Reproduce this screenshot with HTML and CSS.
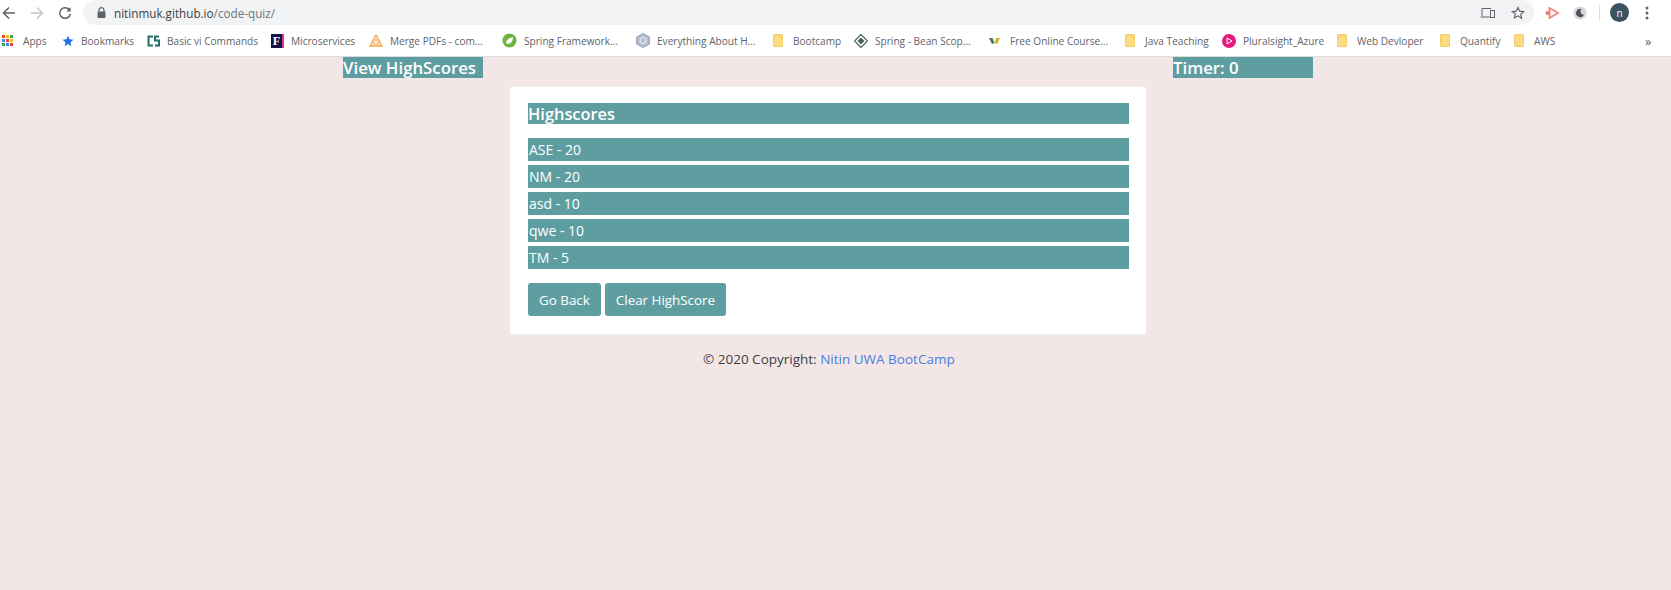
FILE: index.html
```html
<!DOCTYPE html>
<html lang="en">
<head>
    <meta charset="UTF-8">
    <title>Code Quiz</title>
    <link rel="stylesheet" href="styles.css">
</head>
<body>
    <div class="browser-top">
        <div class="nav-icons">
            <svg width="14" height="14" viewBox="0 0 14 14"><path d="M13 7H2M7 1.5 1.5 7 7 12.5" fill="none" stroke="#5f6368" stroke-width="1.5"/></svg>
            <svg width="14" height="14" viewBox="0 0 14 14"><path d="M1 7h11M7 1.5 12.5 7 7 12.5" fill="none" stroke="#c4c7ca" stroke-width="1.5"/></svg>
            <svg width="14" height="14" viewBox="0 0 14 14"><path d="M11.6 4.2A5.3 5.3 0 1 0 12.3 8" fill="none" stroke="#5f6368" stroke-width="1.5"/><path d="M12.6 1.2v4.3H8.3z" fill="#5f6368"/></svg>
        </div>
        <div class="omnibox">
            <svg class="lock" width="9" height="11" viewBox="0 0 9 11"><path d="M2 5V3.2a2.5 2.5 0 0 1 5 0V5" fill="none" stroke="#5f6368" stroke-width="1.2"/><rect x="0.5" y="4.5" width="8" height="6.5" rx="1" fill="#5f6368"/></svg>
            <span class="url">nitinmuk.github.io<span class="url-path">/code-quiz/</span></span>
            <div class="omni-icons">
                <svg width="15" height="12" viewBox="0 0 15 12"><path d="M2 9V1.5h9M0.5 10h9" fill="none" stroke="#5f6368" stroke-width="1"/><rect x="10.5" y="3.5" width="4" height="7" fill="none" stroke="#5f6368"/></svg>
                <svg width="14" height="14" viewBox="0 0 24 24"><path d="M12 2.5l2.9 6.4 7 .8-5.2 4.7 1.4 6.9L12 16.900l-6.100 3.500 1.400-6.900L2.100 9.700l7-.8z" fill="none" stroke="#5f6368" stroke-width="2"/></svg>
            </div>
        </div>
        <div class="ext-icons">
            <svg class="ext-red" width="14" height="12" viewBox="0 0 14 12"><path d="M4.500 1 13 6 4.500 11z" fill="none" stroke="#f28b82" stroke-width="2"/><circle cx="2.500" cy="6" r="2" fill="#ee7d74"/></svg>
            <svg class="ext-moon" width="14" height="14" viewBox="0 0 14 14"><circle cx="7" cy="7" r="6.500" fill="#d5d8da"/><path d="M8.500 3A4.200 4.200 0 1 0 11 9 3.500 3.500 0 0 1 8.500 3z" fill="#4d5156"/></svg>
            <span class="divider"></span>
            <span class="avatar">n</span>
            <svg class="dots" width="4" height="14" viewBox="0 0 4 14"><circle cx="2" cy="2" r="1.500" fill="#5f6368"/><circle cx="2" cy="7" r="1.500" fill="#5f6368"/><circle cx="2" cy="12" r="1.500" fill="#5f6368"/></svg>
        </div>
    </div>

    <div class="bookmarks">
        <a class="bm bm-wide">
            <svg width="11" height="11" viewBox="0 0 11 11"><g><rect width="3" height="3" fill="#ea4335"/><rect x="4" width="3" height="3" fill="#fbbc04"/><rect x="8" width="3" height="3" fill="#34a853"/><rect y="4" width="3" height="3" fill="#4285f4"/><rect x="4" y="4" width="3" height="3" fill="#ea4335"/><rect x="8" y="4" width="3" height="3" fill="#fbbc04"/><rect y="8" width="3" height="3" fill="#34a853"/><rect x="4" y="8" width="3" height="3" fill="#4285f4"/><rect x="8" y="8" width="3" height="3" fill="#ea4335"/></g></svg>
            <span>Apps</span>
        </a>
        <a class="bm">
            <svg width="12" height="12" viewBox="0 0 24 24"><path d="M12 1.500l3.100 7.200 7.800.7-5.900 5.200 1.800 7.700L12 18.200l-6.800 4.100 1.800-7.700-5.900-5.200 7.800-.7z" fill="#1a73e8"/></svg>
            <span>Bookmarks</span>
        </a>
        <a class="bm">
            <svg width="13" height="12" viewBox="0 0 13 12"><path d="M6 1.500H1.500v9H6M12 1.500H8v4h4v5H8" fill="none" stroke="#1f6f6b" stroke-width="2"/></svg>
            <span>Basic vi Commands</span>
        </a>
        <a class="bm">
            <span class="fav-f">F</span>
            <span>Microservices</span>
        </a>
        <a class="bm">
            <svg width="14" height="13" viewBox="0 0 14 13"><path d="M7 1 13 12H1z" fill="none" stroke="#f5a33b" stroke-width="1.300"/><path d="M7 5l3 5H4z" fill="none" stroke="#f5a33b"/></svg>
            <span>Merge PDFs - com...</span>
        </a>
        <a class="bm">
            <svg width="15" height="15" viewBox="0 0 15 15"><circle cx="7.500" cy="7.500" r="7" fill="#6db33f"/><path d="M4 10.500C4 6.500 7 5 11 4c0 4-2 7-5.500 6.800" fill="#fff"/></svg>
            <span>Spring Framework...</span>
        </a>
        <a class="bm">
            <svg width="14" height="15" viewBox="0 0 14 15"><path d="M7 .5 13.300 4v7L7 14.500.7 11V4z" fill="#b6c0d0" stroke="#8e9bb0"/><circle cx="7" cy="7.500" r="3" fill="none" stroke="#eef0f4"/></svg>
            <span>Everything About H...</span>
        </a>
        <a class="bm bm-wide"><span class="folder"></span><span>Bootcamp</span></a>
        <a class="bm">
            <svg width="14" height="14" viewBox="0 0 14 14"><path d="M7 .5 13.500 7 7 13.500.5 7z" fill="none" stroke="#47655a" stroke-width="1.200"/><path d="M7 3.500 10.500 7 7 10.500 3.500 7z" fill="#47655a"/></svg>
            <span>Spring - Bean Scop...</span>
        </a>
        <a class="bm bm-wide">
            <svg width="11" height="6" viewBox="0 0 11 6"><path d="M0 0h3.500L5.500 5 3 6z" fill="#3f7d4f"/><path d="M11 0H7.500L5.500 5 8 6z" fill="#d7a928"/></svg>
            <span>Free Online Course...</span>
        </a>
        <a class="bm bm-wide"><span class="folder"></span><span>Java Teaching</span></a>
        <a class="bm">
            <svg width="14" height="14" viewBox="0 0 14 14"><circle cx="7" cy="7" r="7" fill="#e6197d"/><path d="M5 4l5 3-5 3z" fill="none" stroke="#fff"/></svg>
            <span>Pluralsight_Azure</span>
        </a>
        <a class="bm bm-wide"><span class="folder"></span><span>Web Devloper</span></a>
        <a class="bm bm-wide"><span class="folder"></span><span>Quantify</span></a>
        <a class="bm bm-wide"><span class="folder"></span><span>AWS</span></a>
        <span class="more">»</span>
    </div>

    <div class="page">
        <div class="top-row">
            <span class="top-label">View HighScores</span>
            <span class="top-label">Timer: 0</span>
        </div>

        <div class="card">
            <h2 class="card-title">Highscores</h2>
            <ul class="scores">
                <li>ASE - 20</li>
                <li>NM - 20</li>
                <li>asd - 10</li>
                <li>qwe - 10</li>
                <li>TM - 5</li>
            </ul>
            <div class="buttons">
                <button class="btn">Go Back</button>
                <button class="btn">Clear HighScore</button>
            </div>
        </div>

        <p class="footer">© 2020 Copyright: <a href="#">Nitin UWA BootCamp</a></p>
    </div>
</body>
</html>
```

FILE: styles.css
```css
* {
    box-sizing: border-box;
}

html, body {
    height: 100%;
}

body {
    margin: 0;
    display: flex;
    flex-direction: column;
    background-color: #f3e6e6;
    font-family: "Open Sans", "Noto Sans", sans-serif;
    overflow: hidden;
}

/* browser chrome */
.browser-top {
    height: 25px;
    background-color: #fff;
    display: flex;
    align-items: center;
}

.nav-icons {
    width: 83px;
    padding-left: 2px;
    display: flex;
    align-items: center;
    gap: 14px;
}

.omnibox {
    width: 1451px;
    height: 25px;
    background-color: #f1f3f4;
    border-radius: 13px;
    display: flex;
    align-items: center;
    padding: 0 9px 0 14px;
}

.lock {
    margin-right: 8px;
}

.url {
    font-size: 11.7px;
    color: #3c4043;
}

.url-path {
    color: #70757a;
}

.omni-icons {
    margin-left: auto;
    display: flex;
    align-items: center;
    gap: 16px;
}

.ext-icons {
    flex: 1;
    display: flex;
    align-items: center;
    padding-left: 11px;
}

.ext-moon {
    margin-left: 14px;
}

.divider {
    width: 1px;
    height: 16px;
    background-color: #dadce0;
    margin: 0 10px 0 12px;
}

.avatar {
    width: 19px;
    height: 19px;
    border-radius: 50%;
    background-color: #3c5462;
    color: #fff;
    font-size: 10px;
    display: flex;
    align-items: center;
    justify-content: center;
}

.dots {
    margin-left: 16px;
}

.bookmarks {
    height: 32px;
    background-color: #fff;
    border-bottom: 1px solid #dcdcdc;
    display: grid;
    grid-template-columns: 60px 85px 124px 98px 133px 134px 137px 81px 135px 136px 97px 115px 103px 74px 131px 1fr;
    align-items: center;
    padding-left: 2px;
    font-size: 10.1px;
    color: #5f6368;
}

.bm {
    display: flex;
    align-items: center;
    gap: 7px;
    white-space: nowrap;
}

.bm-wide {
    gap: 10px;
}

.folder {
    width: 10px;
    height: 13px;
    background-color: #fbdc83;
    border: 1px solid #f3cd6b;
    border-radius: 1px;
}

.fav-f {
    width: 13px;
    height: 14px;
    background-color: #14144a;
    border-right: 2px solid #d6368a;
    color: #fff;
    font-family: "Liberation Serif", serif;
    font-size: 12px;
    font-weight: bold;
    text-align: center;
    line-height: 14px;
}

.more {
    font-size: 13px;
}

/* quiz page */
.page {
    flex: 1;
}

.top-row {
    height: 21px;
    padding-left: 343px;
    display: flex;
    gap: 690px;
}

.top-label {
    width: 140px;
    background-color: #5f9ea0;
    color: #fff;
    font-size: 16.8px;
    font-weight: 600;
    line-height: 21px;
}

.card {
    width: 638px;
    margin: 8px 0 0 509px;
    padding: 16px 17px 18px 18px;
    background-color: #fff;
    border: 1px solid #ececec;
    border-radius: 3px;
}

.card-title {
    margin: 0;
    height: 21px;
    background-color: #5f9ea0;
    color: #fff;
    font-size: 16.4px;
    font-weight: 600;
    line-height: 21px;
}

.scores {
    list-style: none;
    margin: 14px 0 0;
    padding: 0;
    display: flex;
    flex-direction: column;
    gap: 4px;
}

.scores li {
    height: 23px;
    background-color: #5f9ea0;
    color: #fff;
    font-size: 14px;
    line-height: 23px;
    padding-left: 1px;
}

.buttons {
    margin-top: 14px;
    display: flex;
    gap: 4px;
}

.btn {
    height: 33px;
    padding: 0 11px;
    background-color: #5f9ea0;
    color: #fff;
    border: 0;
    border-radius: 3px;
    font-family: inherit;
    font-size: 13.4px;
}

.footer {
    margin: 15px 0 0;
    padding-left: 703px;
    font-size: 13.5px;
    color: #3d4043;
}

.footer a {
    color: #4a7fe0;
    text-decoration: none;
}
```
